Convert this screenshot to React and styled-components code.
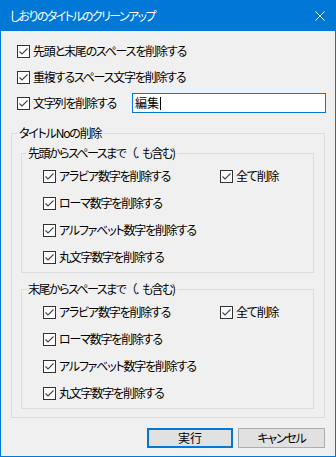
import React from 'react';
import styled, { createGlobalStyle } from 'styled-components';

const GlobalStyle = createGlobalStyle`
  html, body { margin: 0; padding: 0; background: #f0f0f0; }
  body {
    font-family: "Noto Sans CJK JP", "Noto Sans", sans-serif;
    font-size: 12px;
  }
`;

const Window = styled.div`
  width: 336px;
  height: 457px;
  box-sizing: border-box;
  border: 1px solid #0078d7;
  border-top: none;
  background: #f0f0f0;
  display: flex;
  flex-direction: column;
  font-family: "Noto Sans CJK JP", "Noto Sans", sans-serif;
  font-size: 12px;
  color: #000;
  font-feature-settings: "palt";
  letter-spacing: -1.2px;
`;

const TitleBar = styled.div`
  height: 31px;
  flex: 0 0 31px;
  background: #0078d7;
  color: #fff;
  display: flex;
  align-items: center;
  padding-left: 9px;
`;

const TitleText = styled.div`
  flex: 1;
  font-size: 12px;
  line-height: 16px;
  letter-spacing: -1.6px;
`;

const CloseButton = styled.div`
  width: 30px;
  height: 31px;
  display: flex;
  align-items: center;
  justify-content: center;
`;

const Content = styled.div`
  flex: 1;
  display: flex;
  flex-direction: column;
  padding: 10px 10px 8px 10px;
`;

const OptionList = styled.div`
  display: flex;
  flex-direction: column;
  gap: 6px;
  padding-left: 6px;
`;

const Row = styled.div`
  height: 20px;
  display: flex;
  align-items: center;
`;

const CheckLabel = styled.label`
  display: flex;
  align-items: center;
  gap: 3px;
  height: 20px;
  white-space: nowrap;
  line-height: 16px;
`;

const Box = styled.span`
  width: 13px;
  height: 13px;
  box-sizing: border-box;
  border: 1px solid #333;
  background: #fff;
  display: inline-flex;
  flex: 0 0 13px;
`;

const TextField = styled.div`
  margin-left: auto;
  margin-right: -1px;
  width: 194px;
  height: 20px;
  box-sizing: border-box;
  border: 1px solid #0078d7;
  background: #fff;
  display: flex;
  align-items: center;
  padding-left: 2px;
  line-height: 16px;
  letter-spacing: 0;
`;

const Caret = styled.span`
  display: inline-block;
  width: 1px;
  height: 13px;
  background: #000;
  margin-left: 1px;
`;

const Group = styled.div`
  position: relative;
  border: 1px solid #dcdcdc;
  margin-top: ${p => p.$mt || 0}px;
  padding: ${p => p.$pad};
  height: ${p => p.$h}px;
  box-sizing: border-box;
  display: flex;
  flex-direction: column;
  gap: ${p => p.$gap || 0}px;
`;

const Legend = styled.div`
  position: absolute;
  top: -9px;
  left: ${p => p.$left}px;
  padding: 0 2px;
  background: #f0f0f0;
  line-height: 16px;
  white-space: nowrap;
  letter-spacing: ${p => p.$ls || -1.2}px;
`;

const FullWidth = styled.span`
  font-feature-settings: normal;
`;

const Gap = styled.span`
  display: inline-block;
  width: 4px;
`;

const OptionGrid = styled.div`
  display: grid;
  grid-template-columns: 177px 1fr;
  grid-auto-rows: 20px;
  row-gap: 7px;
`;

const ButtonRow = styled.div`
  margin-top: 10px;
  display: flex;
  justify-content: flex-end;
  gap: 5px;
`;

const Button = styled.div`
  width: ${p => p.$w}px;
  height: 20px;
  box-sizing: border-box;
  background: #e1e1e1;
  border: ${p => (p.$default ? '2px solid #0078d7' : '1px solid #adadad')};
  display: flex;
  align-items: center;
  justify-content: center;
  line-height: 16px;
  letter-spacing: ${p => (p.$default ? 0 : -1.2)}px;
`;

function Check({ children }) {
  return (
    <CheckLabel>
      <Box>
        <svg width="11" height="11" viewBox="0 0 11 11">
          <polyline
            points="1.5,5.5 4,8 9.5,2.5"
            fill="none"
            stroke="#444"
            strokeWidth="1.1"
          />
        </svg>
      </Box>
      <span>{children}</span>
    </CheckLabel>
  );
}

function NumberGroup({ lead }) {
  return (
    <Group $h={120} $pad="12px 8px 5px 21px">
      <Legend $left={4} $ls={-1.5}>
        {lead}からスペースまで<FullWidth>（</FullWidth>.<Gap />も含む)
      </Legend>
      <OptionGrid>
        <Check>アラビア数字を削除する</Check>
        <Check>全て削除</Check>
        <Check>ローマ数字を削除する</Check>
        <span />
        <Check>アルファベット数字を削除する</Check>
        <span />
        <Check>丸文字数字を削除する</Check>
        <span />
      </OptionGrid>
    </Group>
  );
}

export default function App() {
  return (
    <>
      <GlobalStyle />
      <Window>
        <TitleBar>
          <TitleText>しおりのタイトルのクリーンアップ</TitleText>
          <CloseButton>
            <svg width="10" height="10" viewBox="0 0 10 10">
              <path d="M0.5 0.5 L9.5 9.5 M9.5 0.5 L0.5 9.5" stroke="#fff" strokeWidth="1" />
            </svg>
          </CloseButton>
        </TitleBar>
        <Content>
          <OptionList>
            <Row><Check>先頭と末尾のスペースを削除する</Check></Row>
            <Row><Check>重複するスペース文字を削除する</Check></Row>
            <Row>
              <Check>文字列を削除する</Check>
              <TextField>編集<Caret /></TextField>
            </Row>
          </OptionList>
          <Group $h={285} $mt={20} $pad="19px 10px 8px 9px" $gap={16}>
            <Legend $left={5}>タイトルNoの削除</Legend>
            <NumberGroup lead="先頭" />
            <NumberGroup lead="末尾" />
          </Group>
          <ButtonRow>
            <Button $w={86} $default>実行</Button>
            <Button $w={87}>キャンセル</Button>
          </ButtonRow>
        </Content>
      </Window>
    </>
  );
}
